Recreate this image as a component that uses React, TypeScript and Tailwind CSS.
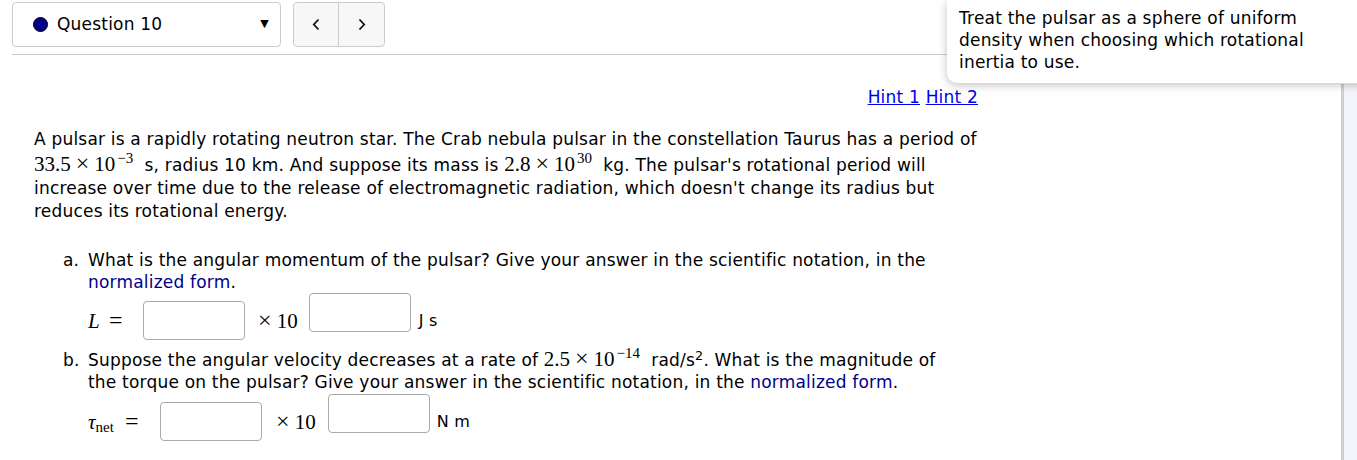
import React from 'react';

const serif = "font-['Liberation_Serif','DejaVu_Serif',serif] tracking-normal";

const Pow = ({ base, exp }: { base: string; exp: string }) => (
    <span className={`${serif} text-[21px] whitespace-nowrap`}>
        {base}<span className="mx-[5px] text-[24px] leading-none">×</span>10<sup className="text-[15px] relative -top-[8px] align-baseline ml-[2px]">{exp}</sup>
    </span>
);

const Box = ({ className = '' }: { className?: string }) => (
    <span className={`inline-block w-[102px] h-[39px] border border-[#aaa] rounded-[4px] bg-white ${className}`} />
);

export default function App() {
    return (
        <div className="relative w-[1357px] h-[460px] bg-white overflow-hidden flex text-black font-['DejaVu_Sans',sans-serif] text-[17px] tracking-[0.2px]">
            <main className="flex-1 pl-[12px]">
                <div className="flex gap-[12px] pt-[2px]">
                    <div className="w-[269px] h-[45px] border border-[#ccc] rounded-[4px] flex items-center pl-[20px] pr-[11px]">
                        <span className="w-[15px] h-[15px] rounded-full bg-[#00008b] border border-black" />
                        <span className="ml-[9px]">Question 10</span>
                        <span className="ml-auto text-[11px]">▼</span>
                    </div>
                    <div className="w-[92px] h-[45px] border border-[#ccc] rounded-[4px] bg-[#f7f7f7] flex">
                        <div className="w-[45px] flex items-center justify-center border-r border-[#ccc]">
                            <svg width="8" height="13" viewBox="0 0 8 13"><path d="M6.5 1.5 L1.8 6.5 L6.5 11.5" fill="none" stroke="#111" strokeWidth="1.8" /></svg>
                        </div>
                        <div className="flex-1 flex items-center justify-center">
                            <svg width="8" height="13" viewBox="0 0 8 13"><path d="M1.5 1.5 L6.2 6.5 L1.5 11.5" fill="none" stroke="#111" strokeWidth="1.8" /></svg>
                        </div>
                    </div>
                </div>
                <div className="mt-[7px] w-[935px] border-t border-[#ccc]" />

                <div className="w-[966px] text-right mt-[31px] leading-[22px]">
                    <a className="text-[#0000ee] underline">Hint 1</a> <a className="text-[#0000ee] underline">Hint 2</a>
                </div>

                <p className="mt-[20px] ml-[22px] w-[948px] leading-[23px]">
                    A pulsar is a rapidly rotating neutron star. The Crab nebula pulsar in the constellation Taurus has a period of{' '}
                    <Pow base="33.5" exp="−3" />&nbsp; s, radius 10 km. And suppose its mass is <Pow base="2.8" exp="30" />&nbsp; kg. The pulsar's rotational period will increase over time due to the release of electromagnetic radiation, which doesn't change its radius but reduces its rotational energy.
                </p>

                <ol className="mt-[26px] ml-[51px] w-[900px] leading-[22px]">
                    <li className="flex items-baseline">
                        <span className="w-[25px] shrink-0">a.</span>
                        <div>
                            <div>
                                What is the angular momentum of the pulsar? Give your answer in the scientific notation, in the <span className="text-[#00008b]">normalized form</span>.
                            </div>
                            <div className="flex items-center mt-[8px] h-[39px]">
                                <span className={`${serif} text-[21px] w-[55px]`}><i>L</i> <span className="ml-[4px] text-[24px]">=</span></span>
                                <Box />
                                <span className={`${serif} text-[21px] ml-[13px]`}><span className="text-[24px]">×</span> 10</span>
                                <Box className="ml-[11px] mb-[16px]" />
                                <span className="ml-[8px] text-[16px]">J s</span>
                            </div>
                        </div>
                    </li>
                    <li className="flex items-baseline mt-[6px]">
                        <span className="w-[25px] shrink-0">b.</span>
                        <div>
                            <div>
                                Suppose the angular velocity decreases at a rate of <Pow base="2.5" exp="−14" />&nbsp; rad/s<sup>2</sup>. What is the magnitude of the torque on the pulsar? Give your answer in the scientific notation, in the <span className="text-[#00008b]">normalized form</span>.
                            </div>
                            <div className="flex items-center mt-[9px] h-[39px]">
                                <span className={`${serif} text-[21px] w-[72px]`}>
                                    <i>τ</i><sub className="text-[15px] relative top-[3px]">net</sub> <span className="ml-[6px] text-[24px]">=</span>
                                </span>
                                <Box />
                                <span className={`${serif} text-[21px] ml-[14px]`}><span className="text-[24px]">×</span> 10</span>
                                <Box className="ml-[12px] mb-[16px]" />
                                <span className="ml-[7px] text-[16px]">N m</span>
                            </div>
                        </div>
                    </li>
                </ol>
            </main>
            <div className="w-[16px] mt-[84px] border-l-[3px] border-[#d0d0d0] bg-[#f4f5fb]" />

            <div className="absolute top-0 left-[947px] w-[420px] h-[83px] bg-white rounded-bl-[10px] shadow-[0_2px_8px_rgba(0,0,0,0.25)] pl-[12px] pt-[7px] leading-[22px]">
                Treat the pulsar as a sphere of uniform
                <br />
                density when choosing which rotational
                <br />
                inertia to use.
            </div>
        </div>
    );
}
